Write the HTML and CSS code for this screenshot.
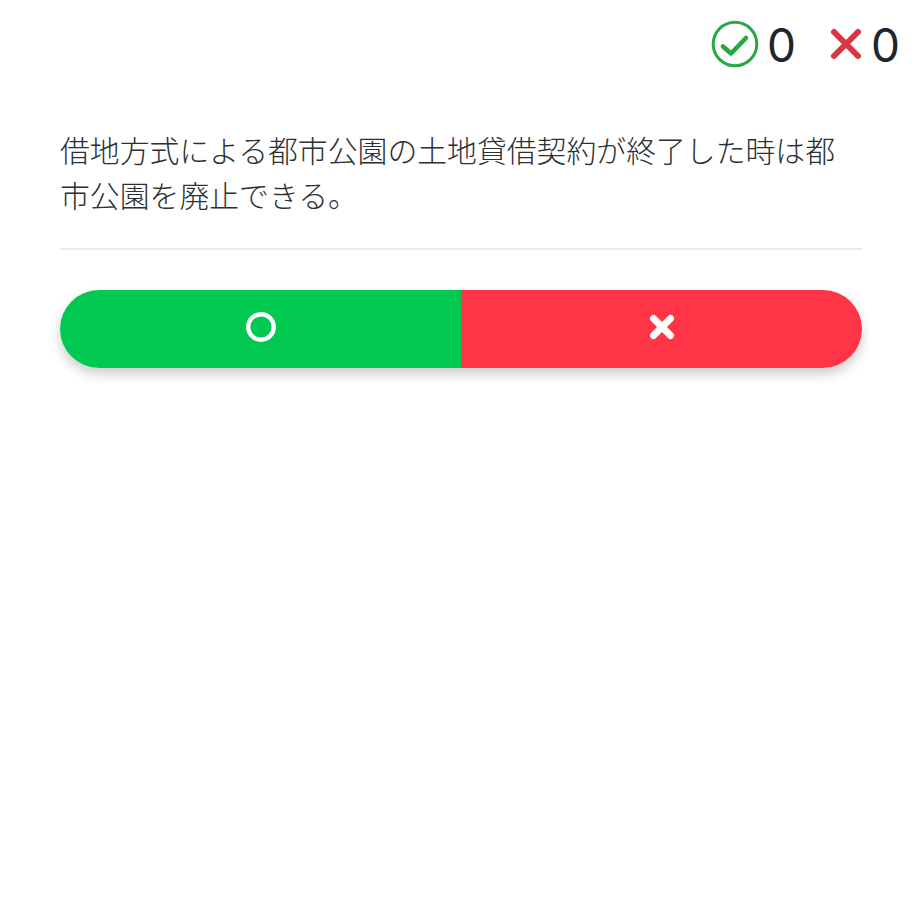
FILE: index.html
```html
<!DOCTYPE html>
<html lang="ja">
<head>
    <meta charset="UTF-8">
    <title>Quiz</title>
    <link rel="stylesheet" href="styles.css">
</head>
<body>
    <div class="score">
        <div class="score-item">
            <svg class="icon-correct" viewBox="0 0 48 48" width="48" height="48">
                <circle cx="24" cy="24" r="21.8" fill="none" stroke="#28a745" stroke-width="3"/>
                <path d="M12 26.5 L20 33.5 L35 18" fill="none" stroke="#28a745" stroke-width="4.6" stroke-linecap="round" stroke-linejoin="round"/>
            </svg>
            <span class="count">0</span>
        </div>
        <div class="score-item">
            <svg class="icon-wrong" viewBox="0 0 34 34" width="34" height="34">
                <path d="M5 5 L29 29 M29 5 L5 29" fill="none" stroke="#dc3545" stroke-width="6" stroke-linecap="round"/>
            </svg>
            <span class="count">0</span>
        </div>
    </div>

    <div class="question">
        <p>借地方式による都市公園の土地貸借契約が終了した時は都市公園を廃止できる。</p>
    </div>

    <div class="answers">
        <button class="answer answer-yes">
            <svg viewBox="0 0 30 30" width="30" height="30">
                <circle cx="15" cy="15" r="12.8" fill="none" stroke="#fff" stroke-width="4.4"/>
            </svg>
        </button>
        <button class="answer answer-no">
            <svg viewBox="0 0 26 26" width="26" height="26">
                <path d="M4.5 4.5 L21.5 21.5 M21.5 4.5 L4.5 21.5" fill="none" stroke="#fff" stroke-width="7" stroke-linecap="round"/>
            </svg>
        </button>
    </div>
</body>
</html>
```

FILE: styles.css
```css
* {
    margin: 0;
    padding: 0;
    box-sizing: border-box;
}

body {
    font-family: "Noto Sans CJK JP", "Liberation Sans", sans-serif;
    background-color: #fff;
    color: #2b3035;
    min-height: 100vh;
    padding: 20px 58px 0 60px;
    position: relative;
}

.score {
    display: flex;
    justify-content: flex-end;
    gap: 33px;
    margin-right: -38px;
    height: 48px;
    color: #212529;
    font-family: Inter, "Liberation Sans", sans-serif;
    font-size: 46px;
    line-height: 48px;
}

.score-item {
    display: flex;
    align-items: center;
    gap: 8px;
}

.count {
    padding-top: 2px;
}

.question {
    margin-top: 59px;
    padding-bottom: 31px;
    border-bottom: 2px solid #e9ecef;
}

.question p {
    font-size: 29.85px;
    font-weight: 300;
    line-height: 45px;
}

.answers {
    display: flex;
    margin-top: 40px;
    border-radius: 39px;
    box-shadow: 0 6px 12px rgba(0, 0, 0, 0.2);
    overflow: hidden;
}

.answer {
    flex: 1;
    height: 78px;
    border: none;
    padding-bottom: 4px;
    display: flex;
    align-items: center;
    justify-content: center;
}

.answer-yes {
    background-color: #00c851;
}

.answer-no {
    background-color: #ff3547;
}
```
